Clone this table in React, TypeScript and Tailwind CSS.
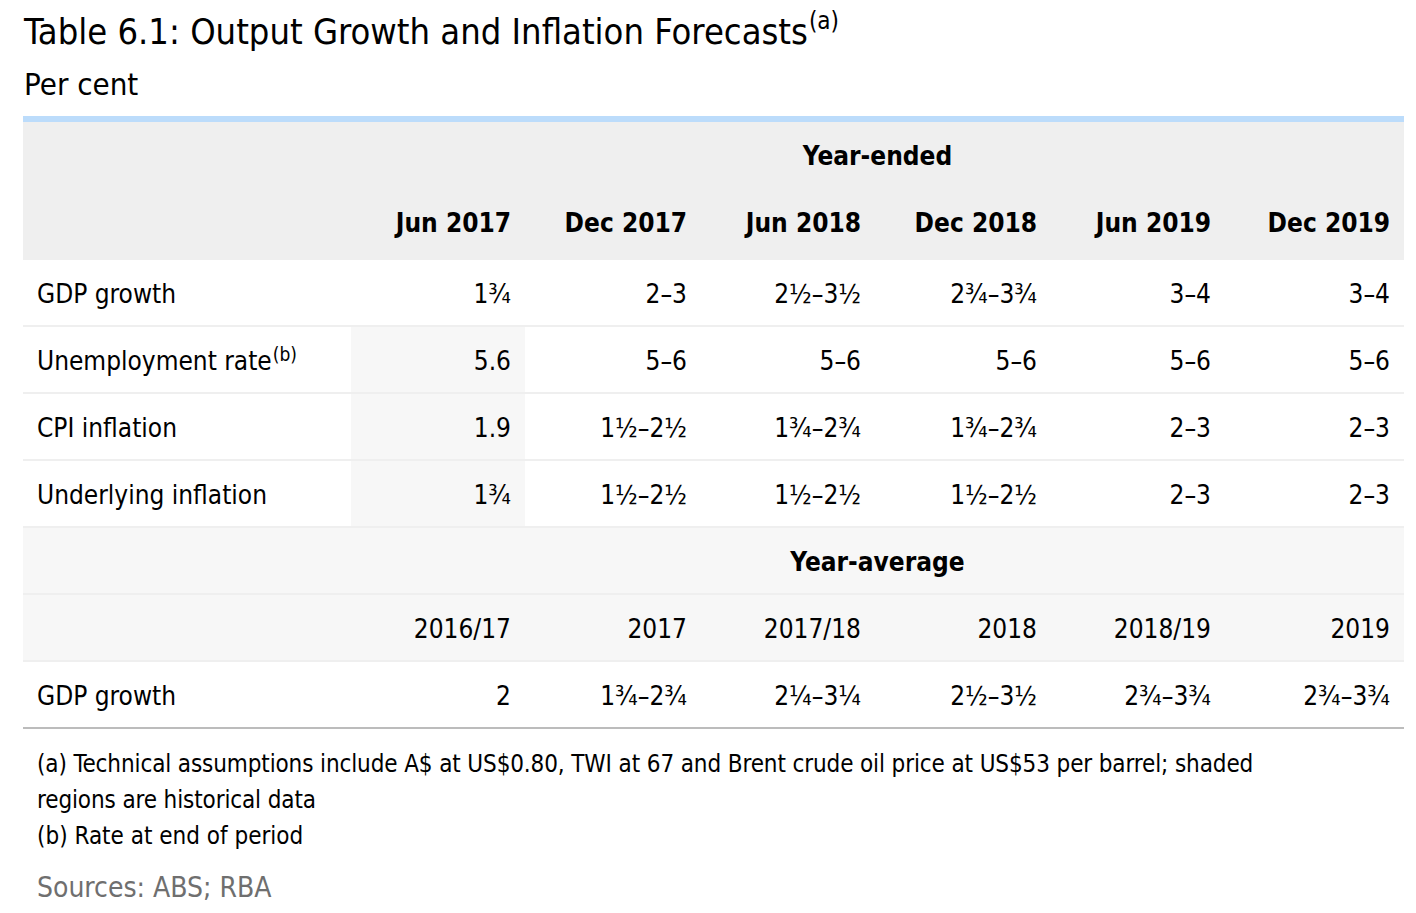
import React from "react";

type Row = { label: string; sup?: string; vals: string[]; shade?: boolean };

const rows: Row[] = [
  { label: "GDP growth", vals: ["1¾", "2–3", "2½–3½", "2¾–3¾", "3–4", "3–4"] },
  { label: "Unemployment rate", sup: "(b)", vals: ["5.6", "5–6", "5–6", "5–6", "5–6", "5–6"], shade: true },
  { label: "CPI inflation", vals: ["1.9", "1½–2½", "1¾–2¾", "1¾–2¾", "2–3", "2–3"], shade: true },
  { label: "Underlying inflation", vals: ["1¾", "1½–2½", "1½–2½", "1½–2½", "2–3", "2–3"], shade: true },
];

const heads = ["Jun 2017", "Dec 2017", "Jun 2018", "Dec 2018", "Jun 2019", "Dec 2019"];
const avgHeads = ["2016/17", "2017", "2017/18", "2018", "2018/19", "2019"];
const avgGdp = ["2", "1¾–2¾", "2¼–3¼", "2½–3½", "2¾–3¾", "2¾–3¾"];

const GRID = "grid grid-cols-[328px_174px_176px_174px_176px_174px_minmax(0,1fr)]";

export default function App() {
  return (
    <div className="w-[1416px] h-[913px] bg-white text-black pl-[23px] pr-[12px] pt-[10px] font-['DejaVu_Sans_Condensed','DejaVu_Sans',sans-serif] overflow-hidden">
      <h1 className="text-[36px] leading-[44px] pl-[1px]">
        Table 6.1: Output Growth and Inflation Forecasts
        <sup className="text-[24px] top-[-0.62em] pl-[1px]">(a)</sup>
      </h1>
      <div className="mt-[12px] text-[31px] leading-[36px] pl-[1px]">Per cent</div>

      <div className="mt-[14px] border-t-[6px] border-[#bcdcfb]">
        <div className="bg-[#efefef]">
          <div className={`${GRID} h-[67px] pt-[2px] items-center`}>
            <div />
            <div className="col-span-6 text-center text-[26px] font-bold">Year-ended</div>
          </div>
          <div className={`${GRID} h-[71px] pb-[2px] items-center`}>
            <div />
            {heads.map((h) => (
              <div key={h} className="text-right pr-[14px] text-[26px] font-bold">
                {h}
              </div>
            ))}
          </div>
        </div>

        {rows.map((r) => (
          <div key={r.label} className={`${GRID} h-[67px] border-b-2 border-[#efefef] text-[26px]`}>
            <div className="flex items-center pl-[14px] pt-[4px]">
              <span>
                {r.label}
                {r.sup && <sup className="text-[19px] pl-[1px]">{r.sup}</sup>}
              </span>
            </div>
            {r.vals.map((v, i) => (
              <div
                key={i}
                className={`flex items-center justify-end pr-[14px] pt-[4px] ${i === 0 && r.shade ? "bg-[#f7f7f7]" : ""}`}
              >
                {v}
              </div>
            ))}
          </div>
        ))}

        <div className={`${GRID} h-[67px] pt-[4px] border-b-2 border-[#efefef] bg-[#f7f7f7] items-center`}>
          <div />
          <div className="col-span-6 text-center text-[26px] font-bold">Year-average</div>
        </div>
        <div className={`${GRID} h-[67px] pt-[4px] border-b-2 border-[#efefef] bg-[#f7f7f7] items-center text-[26px]`}>
          <div />
          {avgHeads.map((h) => (
            <div key={h} className="text-right pr-[14px]">
              {h}
            </div>
          ))}
        </div>
        <div className={`${GRID} h-[67px] pt-[4px] border-b-2 border-[#bcbcbc] items-center text-[26px]`}>
          <div className="pl-[14px]">GDP growth</div>
          {avgGdp.map((v, i) => (
            <div key={i} className="text-right pr-[14px]">
              {v}
            </div>
          ))}
        </div>
      </div>

      <div className="mt-[17px] pl-[14px] text-[24px] leading-[36px] tracking-[-0.12px]">
        <p>
          (a) Technical assumptions include A$ at US$0.80, TWI at 67 and Brent crude oil price at US$53 per barrel; shaded
          <br />
          regions are historical data
        </p>
        <p className="tracking-normal">(b) Rate at end of period</p>
      </div>
      <div className="mt-[16px] pl-[14px] text-[28px] leading-[36px] text-[#6f6f6f]">Sources: ABS; RBA</div>
    </div>
  );
}
